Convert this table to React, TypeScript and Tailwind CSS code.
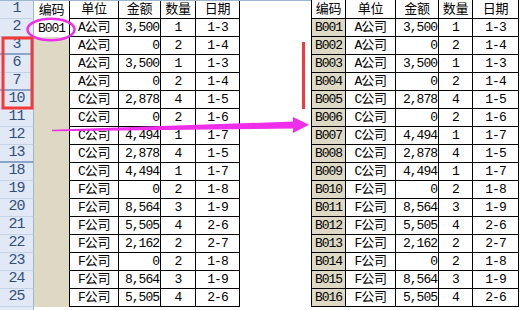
import React from "react";

type Row = { n: string; c: string; u: string; a: string; q: string; d: string };

const data: Row[] = [
  { n: "2", c: "B001", u: "A公司", a: "3,500", q: "1", d: "1-3" },
  { n: "3", c: "B002", u: "A公司", a: "0", q: "2", d: "1-4" },
  { n: "6", c: "B003", u: "A公司", a: "3,500", q: "1", d: "1-3" },
  { n: "7", c: "B004", u: "A公司", a: "0", q: "2", d: "1-4" },
  { n: "10", c: "B005", u: "C公司", a: "2,878", q: "4", d: "1-5" },
  { n: "11", c: "B006", u: "C公司", a: "0", q: "2", d: "1-6" },
  { n: "12", c: "B007", u: "C公司", a: "4,494", q: "1", d: "1-7" },
  { n: "13", c: "B008", u: "C公司", a: "2,878", q: "4", d: "1-5" },
  { n: "18", c: "B009", u: "C公司", a: "4,494", q: "1", d: "1-7" },
  { n: "19", c: "B010", u: "F公司", a: "0", q: "2", d: "1-8" },
  { n: "20", c: "B011", u: "F公司", a: "8,564", q: "3", d: "1-9" },
  { n: "21", c: "B012", u: "F公司", a: "5,505", q: "4", d: "2-6" },
  { n: "22", c: "B013", u: "F公司", a: "2,162", q: "2", d: "2-7" },
  { n: "23", c: "B014", u: "F公司", a: "0", q: "2", d: "1-8" },
  { n: "24", c: "B015", u: "F公司", a: "8,564", q: "3", d: "1-9" },
  { n: "25", c: "B016", u: "F公司", a: "5,505", q: "4", d: "2-6" },
];

const hiddenAfter = new Set(["3", "7", "13"]);

const font =
  "font-['Liberation_Mono','Noto_Sans_CJK_SC',monospace] text-[13px] tracking-[-1px] text-black leading-none";

function T({ s }: { s: string }) {
  const parts = s.split(/([\u4e00-\u9fff]+)/).filter((p) => p.length > 0);
  return (
    <>
      {parts.map((p, i) =>
        /[\u4e00-\u9fff]/.test(p) ? (
          <span key={i} className="tracking-[-0.3px]">
            {p}
          </span>
        ) : (
          <span key={i}>{p}</span>
        )
      )}
    </>
  );
}

function LeftRow({ r, header }: { r?: Row; header?: boolean }) {
  const n = header ? "1" : r!.n;
  const hidden = !header && hiddenAfter.has(n);
  const cell = "h-full flex items-center border-r border-b border-black";
  return (
    <div className="flex h-[18px]">
      <div
        className={
          "w-[34px] h-full flex items-center justify-center bg-[#e0e9f5] border-r border-[#9eb6ce] text-[#34507a] font-['Liberation_Mono',monospace] text-[15px] tracking-[-1px] " +
          (hidden ? "border-b-2 border-b-[#8aa5c8]" : "border-b border-b-[#c3d2e4]")
        }
      >
        {n}
      </div>
      <div
        className={
          "w-[36px] h-full flex items-center justify-center border-r border-black " +
          font +
          (header || n === "2" ? " bg-white" : " bg-[#ddd9c4]")
        }
      >
        <T s={header ? "编码" : r!.n === "2" ? "B001" : ""} />
      </div>
      <div className={"w-[49px] justify-center " + cell + " " + font}>
        <T s={header ? "单位" : r!.u} />
      </div>
      <div className={"w-[42px] " + (header ? "justify-center " : "justify-end pr-[1px] ") + cell + " " + font}>
        <T s={header ? "金额" : r!.a} />
      </div>
      <div className={"w-[35px] justify-center " + cell + " " + font}>
        <T s={header ? "数量" : r!.q} />
      </div>
      <div className={"w-[44px] justify-center " + cell + " " + font}>
        <T s={header ? "日期" : r!.d} />
      </div>
    </div>
  );
}

function RightRow({ r, header }: { r?: Row; header?: boolean }) {
  const cell = "h-full flex items-center border-r border-b border-black " + font;
  return (
    <div className={"flex " + (header ? "h-[19px]" : "h-[18px]")}>
      <div
        className={
          "w-[35px] justify-center border-l " + cell + (header ? " bg-white" : " bg-[#ddd9c4]")
        }
      >
        <T s={header ? "编码" : r!.c} />
      </div>
      <div className={"w-[50px] justify-center " + cell}>
        <T s={header ? "单位" : r!.u} />
      </div>
      <div className={"w-[43px] " + (header ? "justify-center " : "justify-end pr-[1px] ") + cell}>
        <T s={header ? "金额" : r!.a} />
      </div>
      <div className={"w-[34px] justify-center " + cell}>
        <T s={header ? "数量" : r!.q} />
      </div>
      <div className={"w-[46px] justify-center " + cell}>
        <T s={header ? "日期" : r!.d} />
      </div>
    </div>
  );
}

export default function App() {
  return (
    <div className="relative w-[522px] h-[310px] bg-white overflow-hidden flex">
      <div className="w-[311px] h-full flex flex-col border-t border-[#9eb6ce]">
        <LeftRow header />
        {data.map((r) => (
          <LeftRow key={r.n} r={r} />
        ))}
        <div className="w-[34px] flex-1 bg-[#e0e9f5] border-r border-[#9eb6ce]" />
      </div>
      <div className="flex-1 h-full flex flex-col">
        <RightRow header />
        {data.map((r) => (
          <RightRow key={r.c} r={r} />
        ))}
      </div>
      <svg
        className="absolute inset-0 pointer-events-none"
        width="522"
        height="310"
        viewBox="0 0 522 310"
      >
        <ellipse cx="51" cy="29.5" rx="23.5" ry="10.8" fill="none" stroke="#ee2ee8" strokeWidth="2.5" />
        <rect x="3" y="38" width="29" height="70" fill="none" stroke="#f23a3a" strokeWidth="3" />
        <rect x="302" y="42" width="3" height="67" fill="#f23a3a" />
        <polygon points="52,129.8 295,121.5 295,128.5 52,131.2" fill="#ee2ee8" />
        <polygon points="293,117 309,124.8 293,133" fill="#ee2ee8" />
      </svg>
    </div>
  );
}
